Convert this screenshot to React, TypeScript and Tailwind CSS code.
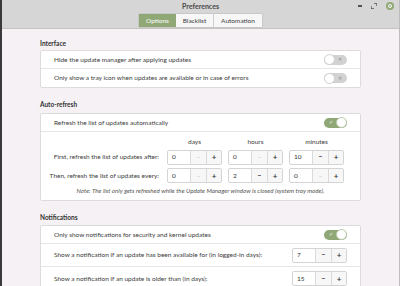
import React from "react";

type SpinProps = { value: string; minusOff?: boolean };

function Toggle({ on }: { on: boolean }) {
  return on ? (
    <div className="relative w-[23px] h-[10px] rounded-full bg-[#8fa876] flex items-center">
      <span className="ml-[5px] text-white text-[5px] leading-none">✓</span>
      <div className="absolute right-0 top-[-0.5px] w-[11px] h-[11px] rounded-full bg-white border border-[#b8c7aa]" />
    </div>
  ) : (
    <div className="relative w-[23px] h-[10px] rounded-full bg-[#d2d2d2] flex items-center justify-end">
      <span className="mr-[5px] text-[#8a8a8a] text-[5px] leading-none">✕</span>
      <div className="absolute left-0 top-[-0.5px] w-[11px] h-[11px] rounded-full bg-white border border-[#d0d0d0]" />
    </div>
  );
}

function Spin({ value, minusOff }: SpinProps) {
  return (
    <div className="flex h-[15px] w-[55px] border border-[#d4d4d4] rounded-[2px] bg-white text-[6.5px]">
      <div className="w-[22px] flex items-center pl-[4px] text-[#333]">{value}</div>
      <div
        className={
          "w-[16px] flex items-center justify-center border-l border-[#dadada] bg-[#f7f7f7] " +
          (minusOff ? "text-[#b8b8b8]" : "text-[#333] font-bold")
        }
      >
        −
      </div>
      <div className="flex-1 flex items-center justify-center border-l border-[#dadada] bg-[#f7f7f7] text-[#333] font-bold text-[8px]">
        +
      </div>
    </div>
  );
}

function Row({ children, h = "h-[18px]", last }: { children: React.ReactNode; h?: string; last?: boolean }) {
  return (
    <div className={`${h} flex items-center justify-between pl-[13px] pr-[13px] ${last ? "" : "border-b border-[#e6e6e6]"}`}>
      {children}
    </div>
  );
}

export default function App() {
  return (
    <div
      className="w-[400px] h-[286px] overflow-hidden flex flex-col bg-[#f5f1f4] border-l-2 border-[#3a3a3a] border-r border-r-[#bdbdbd] text-[#3c3c3c]"
      style={{ fontFamily: 'Lato, "Noto Sans", sans-serif' }}
    >
      {/* title bar */}
      <div className="relative h-[31px] bg-[#d6d6d6] border-b border-[#c4c4c4] flex flex-col items-center">
        <div className="h-[12px] flex items-center text-[7px] font-bold text-[#4a4a4a]">Preferences</div>
        <div className="flex mt-[1px] text-[6.5px] h-[15px] rounded-[2px] border border-[#c8c8c8]">
          <div className="w-[37px] flex items-center justify-center bg-[#8fa876] text-white">Options</div>
          <div className="w-[38px] flex items-center justify-center bg-[#f7f7f7] border-r border-[#d0d0d0]">Blacklist</div>
          <div className="w-[48px] flex items-center justify-center bg-[#f7f7f7]">Automation</div>
        </div>
        <div className="absolute right-[5px] top-[2px] flex items-center gap-[7px] text-[#555]">
          <div className="w-[4px] h-[1.5px] bg-[#555]" />
          <svg width="6" height="6" viewBox="0 0 6 6" className="ml-[2px]">
            <path d="M3 0h3v3M0 3v3h3" stroke="#555" strokeWidth="1.3" fill="none" />
          </svg>
          <div className="ml-[2px] w-[8px] h-[8px] rounded-full bg-[#8fa876] flex items-center justify-center">
            <div className="w-[4px] h-[4px] rounded-full border border-white" />
          </div>
        </div>
      </div>

      {/* content */}
      <div className="px-[38px] pt-[8px] text-[6.5px]">
        <div className="h-[13px] flex items-center font-bold text-[#333]">Interface</div>
        <div className="bg-white border border-[#dcdcdc] rounded-[2px]">
          <Row>
            <span>Hide the update manager after applying updates</span>
            <Toggle on={false} />
          </Row>
          <Row last>
            <span>Only show a tray icon when updates are available or in case of errors</span>
            <Toggle on={false} />
          </Row>
        </div>

        <div className="h-[13px] mt-[10px] flex items-center font-bold text-[#333]">Auto-refresh</div>
        <div className="mt-[2px] bg-white border border-[#dcdcdc] rounded-[2px]">
          <Row>
            <span>Refresh the list of updates automatically</span>
            <Toggle on />
          </Row>
          <div className="pt-[3px] pb-[4px]">
            <div className="flex h-[13px] items-center">
              <div className="w-[126px]" />
              <div className="flex gap-[6px]">
                <div className="w-[55px] text-center">days</div>
                <div className="w-[55px] text-center">hours</div>
                <div className="w-[55px] text-center">minutes</div>
              </div>
            </div>
            <div className="flex items-center h-[18px]">
              <div className="w-[118px] text-right">First, refresh the list of updates after:</div>
              <div className="flex gap-[6px] ml-[8px]">
                <Spin value="0" minusOff />
                <Spin value="0" minusOff />
                <Spin value="10" />
              </div>
            </div>
            <div className="flex items-center h-[19px]">
              <div className="w-[118px] text-right">Then, refresh the list of updates every:</div>
              <div className="flex gap-[6px] ml-[8px]">
                <Spin value="0" minusOff />
                <Spin value="2" />
                <Spin value="0" minusOff />
              </div>
            </div>
            <div className="h-[11px] flex items-center justify-center italic text-[6.2px] text-[#555]">
              Note: The list only gets refreshed while the Update Manager window is closed (system tray mode).
            </div>
          </div>
        </div>

        <div className="h-[13px] mt-[10px] flex items-center font-bold text-[#333]">Notifications</div>
        <div className="mt-[1px] bg-white border border-[#dcdcdc] rounded-[2px]">
          <Row>
            <span>Only show notifications for security and kernel updates</span>
            <Toggle on />
          </Row>
          <Row h="h-[23px]">
            <span>Show a notification if an update has been available for (in logged-in days):</span>
            <Spin value="7" />
          </Row>
          <Row h="h-[23px]" last>
            <span>Show a notification if an update is older than (in days):</span>
            <Spin value="15" />
          </Row>
        </div>
      </div>
    </div>
  );
}
